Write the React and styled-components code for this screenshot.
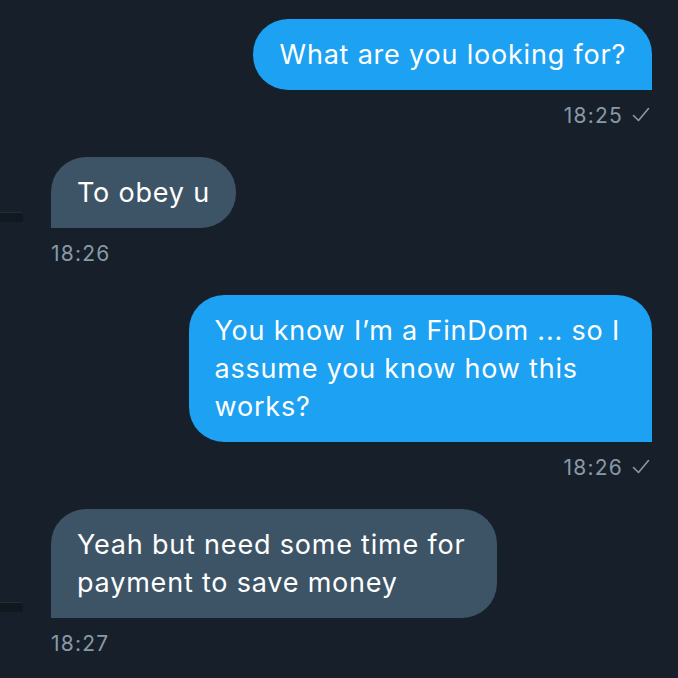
import React from 'react';
import styled, { createGlobalStyle } from 'styled-components';

const messages = [
    { id: 1, mine: true, lines: ['What are you looking for?'], time: '18:25' },
    { id: 2, mine: false, lines: ['To obey u'], time: '18:26' },
    { id: 3, mine: true, lines: ['You know I\u2019m a FinDom ... so I', 'assume you know how this', 'works?'], time: '18:26' },
    { id: 4, mine: false, lines: ['Yeah but need some time for', 'payment to save money'], time: '18:27' },
];

const Check = () => (
    <svg width="18" height="16" viewBox="0 0 18 16" fill="none">
        <path d="M1.5 8.5 L6.5 13.5 L16.5 1.5" stroke="#8899a6" strokeWidth="1.6" strokeLinecap="round" strokeLinejoin="round" />
    </svg>
);

const App = () => {
    return (
        <>
            <GlobalStyle />
            <Thread>
                {messages.map(m => (
                    <Entry key={m.id} mine={m.mine}>
                        <Row>
                            {!m.mine && <AvatarStub />}
                            <Bubble mine={m.mine} wrapped={m.lines.length > 1}>
                                {m.lines.map((line, i) => (
                                    <Line key={i}>{line}</Line>
                                ))}
                            </Bubble>
                        </Row>
                        <Meta mine={m.mine}>
                            <span>{m.time}</span>
                            {m.mine && <Check />}
                        </Meta>
                    </Entry>
                ))}
            </Thread>
        </>
    )
};

const GlobalStyle = createGlobalStyle`
    html, body {
        margin: 0;
        padding: 0;
        background: #161f2a;
    }
`;

const Thread = styled.div`
    width: 678px;
    height: 678px;
    box-sizing: border-box;
    padding: 19px 26px 0 51px;
    display: flex;
    flex-direction: column;
    gap: 30px;
    font-family: Inter, "Liberation Sans", sans-serif;
    overflow: hidden;
`;

const Entry = styled.div`
    display: flex;
    flex-direction: column;
    align-items: ${props => props.mine ? 'flex-end' : 'flex-start'};
`;

const Row = styled.div`
    position: relative;
    display: flex;
`;

const AvatarStub = styled.div`
    position: absolute;
    left: -51px;
    bottom: 6px;
    width: 23px;
    height: 9px;
    border-radius: 0 2px 2px 0;
    background: #111820;
    border-top: 1px solid #232d39;
`;

const Bubble = styled.div`
    box-sizing: border-box;
    padding: 16.5px ${props => props.wrapped ? '32px' : '26px'} 16.5px 26px;
    background: ${props => props.mine ? '#1da1f2' : '#3d5466'};
    color: #ffffff;
    border-radius: ${props => props.mine ? '35px 35px 0 35px' : '35px 35px 35px 0'};
    font-size: 27px;
    letter-spacing: 0.8px;
    line-height: 38px;
    white-space: nowrap;
`;

const Line = styled.div``;

const Meta = styled.div`
    display: flex;
    align-items: center;
    gap: 9px;
    height: 24px;
    margin-top: 13px;
    padding-right: ${props => props.mine ? '2px' : '0'};
    color: #8899a6;
    font-size: 21px;
    letter-spacing: 1.2px;
`;

export default App;
